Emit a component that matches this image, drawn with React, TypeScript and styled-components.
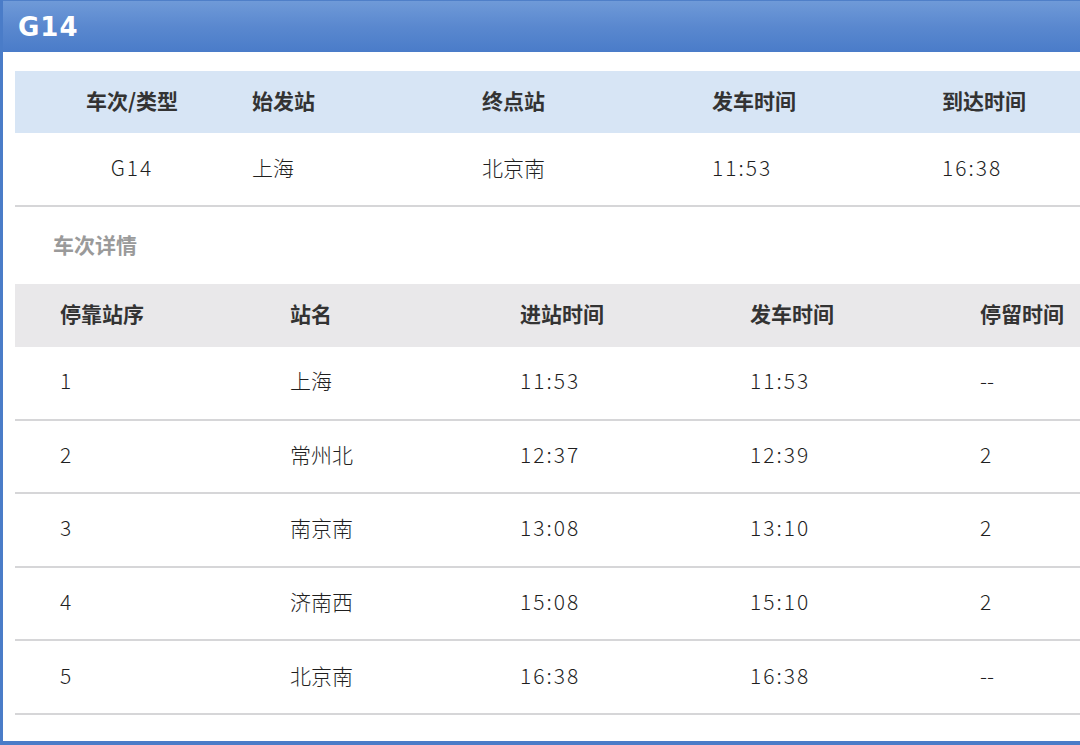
import styled, { createGlobalStyle } from "styled-components";

const Global = createGlobalStyle`
  html, body { margin: 0; padding: 0; background: #fff; }
  body { font-family: "Noto Sans CJK SC", "Noto Sans", sans-serif; color: #333; }
`;

const COL = 230;

const Frame = styled.div`
  width: 1080px;
  height: 745px;
  box-sizing: border-box;
  border-left: 3px solid #4a7cc8;
  border-bottom: 4px solid #4a7cc8;
  overflow: hidden;
  display: flex;
  flex-direction: column;
`;

const TitleBar = styled.div`
  height: 52px;
  margin-left: -3px;
  box-sizing: border-box;
  border-top: 1px solid #4f7fc8;
  background: linear-gradient(#6f9ad8, #5a88cf 50%, #4a7cc9);
  display: flex;
  align-items: center;
  padding-left: 18px;
`;

const Title = styled.h1`
  margin: 0;
  font-family: "DejaVu Sans", "Verdana", sans-serif;
  font-weight: bold;
  font-size: 26px;
  letter-spacing: 1px;
  color: #fff;
`;

const Body = styled.div`
  padding: 19px 0 0 12px;
  display: flex;
  flex-direction: column;
`;

const Row = styled.div<{ $bg?: string; $h: number; $line?: boolean }>`
  display: grid;
  grid-template-columns: repeat(5, ${COL}px);
  width: ${COL * 5}px;
  height: ${(p) => p.$h}px;
  box-sizing: border-box;
  background: ${(p) => p.$bg ?? "#fff"};
  border-bottom: ${(p) => (p.$line ? "2px solid #d6d6d8" : "none")};
  align-items: center;
`;

const Cell = styled.div<{ $head?: boolean; $center?: boolean; $pad: number; $num?: boolean }>`
  font-size: 21px;
  font-weight: ${(p) => (p.$head ? 700 : 300)};
  color: ${(p) => (p.$head ? "#333" : "#1f1f1f")};
  text-align: ${(p) => (p.$center ? "center" : "left")};
  padding-left: ${(p) => p.$pad}px;
  padding-bottom: 5px;
  letter-spacing: ${(p) => (p.$num ? 2 : 0)}px;
  white-space: nowrap;
`;

const SectionLabel = styled.div`
  height: 77px;
  display: flex;
  align-items: center;
  padding-left: 38px;
  padding-bottom: 4px;
  box-sizing: border-box;
  font-size: 21px;
  font-weight: 700;
  color: #9a9a9a;
`;

const Spacer = styled.div`
  flex: 1;
`;

const isNum = (t: string) => /^[0-9A-Z:]+$/.test(t);

const summaryHead = ["车次/类型", "始发站", "终点站", "发车时间", "到达时间"];
const summary = ["G14", "上海", "北京南", "11:53", "16:38"];
const stopHead = ["停靠站序", "站名", "进站时间", "发车时间", "停留时间"];
const stops = [
  ["1", "上海", "11:53", "11:53", "--"],
  ["2", "常州北", "12:37", "12:39", "2"],
  ["3", "南京南", "13:08", "13:10", "2"],
  ["4", "济南西", "15:08", "15:10", "2"],
  ["5", "北京南", "16:38", "16:38", "--"],
];

export default function App() {
  return (
    <>
      <Global />
      <Frame>
        <TitleBar>
          <Title>G14</Title>
        </TitleBar>
        <Body>
          <Row $bg="#d7e5f5" $h={62}>
            {summaryHead.map((t, i) => (
              <Cell key={t} $head $center={i === 0} $pad={i === 0 ? 4 : 7}>
                {t}
              </Cell>
            ))}
          </Row>
          <Row $h={74} $line>
            {summary.map((t, i) => (
              <Cell key={i} $num={isNum(t)} $center={i === 0} $pad={i === 0 ? 4 : 7}>
                {t}
              </Cell>
            ))}
          </Row>
          <SectionLabel>车次详情</SectionLabel>
          <Row $bg="#e9e8ea" $h={63}>
            {stopHead.map((t) => (
              <Cell key={t} $head $pad={45}>
                {t}
              </Cell>
            ))}
          </Row>
          {stops.map((r) => (
            <Row key={r[0]} $h={73.6} $line>
              {r.map((t, i) => (
                <Cell key={i} $num={isNum(t)} $pad={45}>
                  {t}
                </Cell>
              ))}
            </Row>
          ))}
          <Spacer />
        </Body>
      </Frame>
    </>
  );
}
